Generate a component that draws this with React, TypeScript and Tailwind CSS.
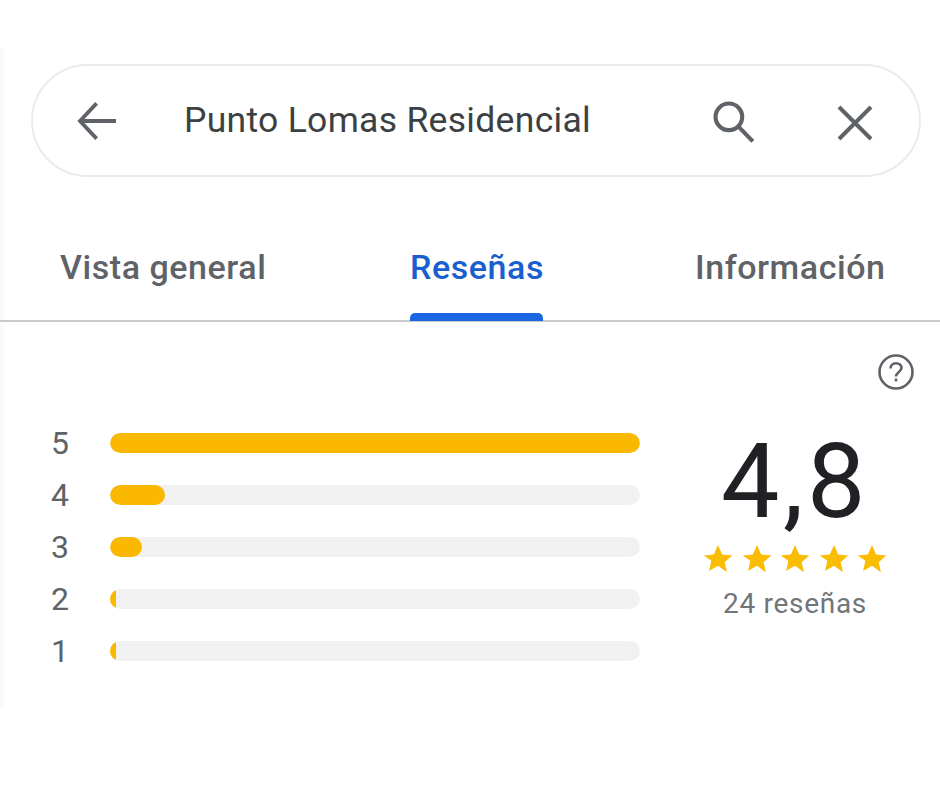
import React from 'react';

const bars = [
  { label: '5', width: 530 },
  { label: '4', width: 55 },
  { label: '3', width: 32 },
  { label: '2', width: 6 },
  { label: '1', width: 6 },
];

const Star = () => (
  <svg width="34" height="34" viewBox="0 0 24 24" className="text-[#fbbc04]" fill="currentColor">
    <path d="M12 2.2l2.9 6.6 7.2.7-5.4 4.8 1.6 7.1L12 16.7l-6.3 3.7 1.6-7.1L1.9 9.5l7.2-.7z" />
  </svg>
);

const App = () => {
  return (
    <div className="w-[940px] h-[788px] bg-white pt-12 font-['Roboto',sans-serif] overflow-hidden">
      <div className="h-[660px] border-l-[4px] border-[#fafafa]">
        <div className="pt-4 pl-[27px] pr-[19px]">
          <div className="h-[113px] rounded-full border-2 border-[#ebebeb] flex items-center pl-[40px] pr-[42px]">
            <svg width="48" height="48" viewBox="0 0 24 24" fill="none" stroke="#5f6368" strokeWidth="1.9" className="shrink-0">
              <path d="M21.5 12H4M11.8 3.2 3.5 12l8.3 8.8" />
            </svg>
            <div className="ml-[63px] flex-1 text-[35.5px] tracking-[0.3px] text-[#3c4043] leading-none whitespace-nowrap">Punto Lomas Residencial</div>
            <svg width="50" height="50" viewBox="0 0 24 24" fill="none" stroke="#5f6368" strokeWidth="2" className="shrink-0">
              <circle cx="10.5" cy="10" r="6.4" />
              <path d="M15 14.6l7 7.2" />
            </svg>
            <svg width="48" height="48" viewBox="0 0 24 24" fill="none" stroke="#5f6368" strokeWidth="2" className="shrink-0 ml-[72px]">
              <path d="M5 5l16 16M21 5 5 21" />
            </svg>
          </div>
        </div>

        <div className="mt-[55px] -ml-[4px] h-[90px] border-b-2 border-[#c8cacc] pl-[60px] flex items-start text-[34px] font-medium tracking-[0.55px] leading-[70px] whitespace-nowrap">
          <div className="text-[#5f6368] w-[350px]">Vista general</div>
          <div className="text-[#1a5fd0] w-[285px] relative h-[88px]">
            Reseñas
            <div className="absolute left-0 bottom-[-1px] w-[133px] h-[8px] bg-[#1a66e0] rounded-t-[5px]" />
          </div>
          <div className="text-[#5f6368]">Información</div>
        </div>

        <div className="flex justify-end pr-[25px] pt-[31px]">
          <svg width="38" height="38" viewBox="0 0 38 38" fill="none" stroke="#5f6368" strokeWidth="2.6">
            <circle cx="19" cy="19" r="16.5" />
            <path d="M13.5 15.5c0-3.2 2.4-5.3 5.5-5.3s5.5 2 5.5 4.9c0 3.8-5.5 4-5.5 8.4" />
            <path d="M19 25.5v3" />
          </svg>
        </div>

        <div className="flex mt-[42px] pl-[47px]">
          <div className="w-[589px] flex flex-col gap-[32px]">
            {bars.map(bar => (
              <div key={bar.label} className="flex items-center h-[20px]">
                <div className="w-[59px] text-[32px] text-[#5f6368] leading-none">{bar.label}</div>
                <div className="w-[530px] h-[20px] rounded-full bg-[#f1f1f1] overflow-hidden">
                  <div className="h-full rounded-full bg-[#fbb800]" style={{ width: bar.width }} />
                </div>
              </div>
            ))}
          </div>
          <div className="ml-[61px] w-[188px] flex flex-col items-center -mt-[3px]">
            <div className="text-[104px] tracking-[3.5px] leading-[104px] text-[#202124]">4,8</div>
            <div className="flex justify-between w-[188px] mt-[8px]">
              <Star />
              <Star />
              <Star />
              <Star />
              <Star />
            </div>
            <div className="text-[28px] tracking-[0.7px] leading-[32px] text-[#70757a] mt-[12px] whitespace-nowrap">24 reseñas</div>
          </div>
        </div>
      </div>
    </div>
  );
};

export default App;
